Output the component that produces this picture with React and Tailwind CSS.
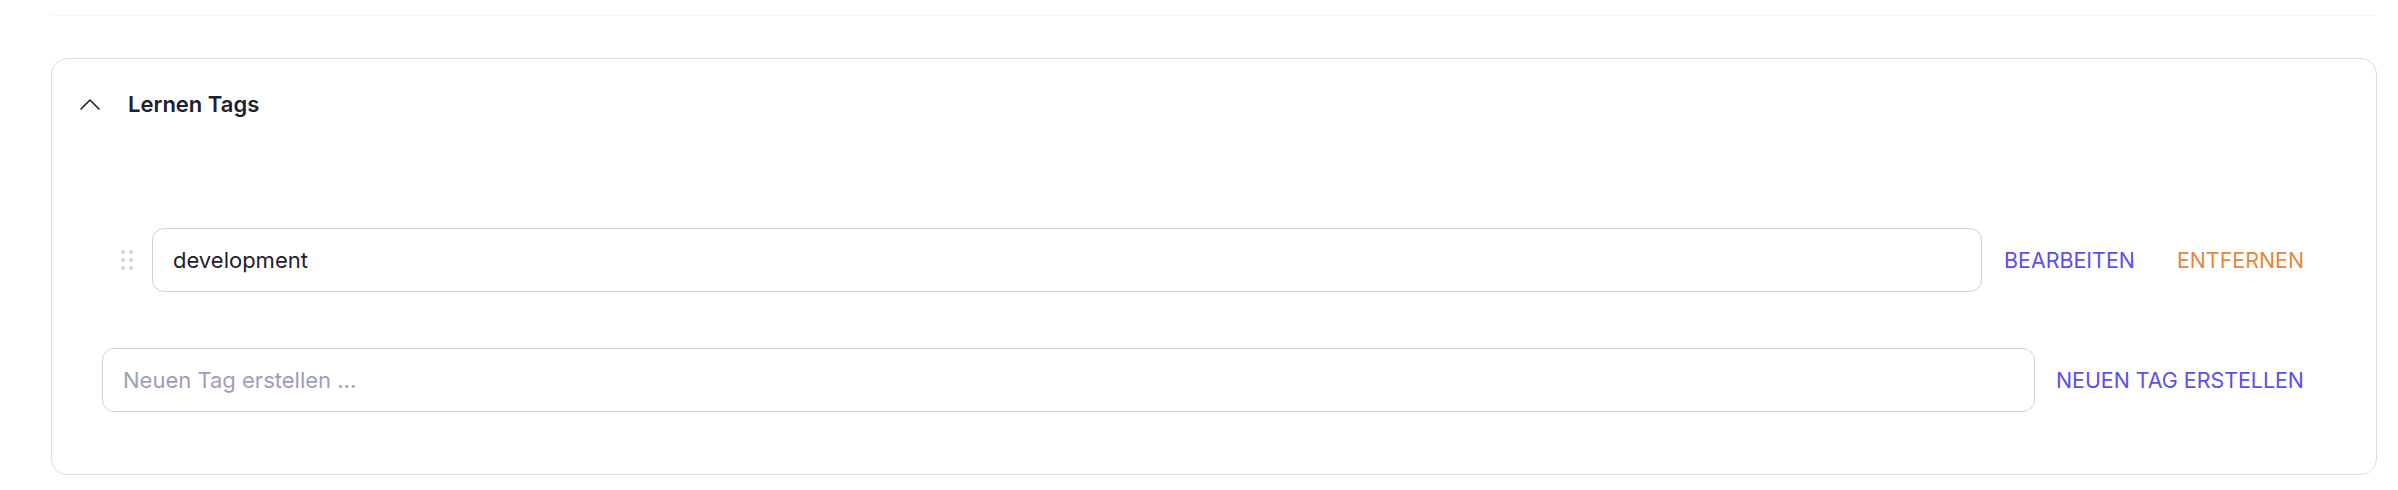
import React from "react";

function ChevronUp() {
  return (
    <svg width="20" height="12" viewBox="0 0 20 12" fill="none" className="text-[#1e2030]">
      <polyline points="1,11 10,2 19,11" stroke="currentColor" strokeWidth="1.6" strokeLinecap="round" strokeLinejoin="round" />
    </svg>
  );
}

function DragHandle() {
  return (
    <div className="grid grid-cols-2 gap-x-[4px] gap-y-[4px]">
      {[0, 1, 2, 3, 4, 5].map((i) => (
        <span key={i} className="block h-[4px] w-[4px] rounded-full bg-[#d5d7e2]"></span>
      ))}
    </div>
  );
}

function TagRow({ tag }) {
  return (
    <div className="flex items-center">
      <div className="flex w-[50px] justify-center">
        <DragHandle />
      </div>
      <input
        defaultValue={tag}
        readOnly
        className="h-16 flex-1 rounded-xl border border-[#cfd0dc] px-5 text-[22px] text-[#1e2030] outline-none"
      />
      <button className="ml-[22px] text-[21.4px] uppercase text-[#5a4ff3]">Bearbeiten</button>
      <button className="ml-[42px] text-[21.4px] uppercase text-[#e5883c]">Entfernen</button>
    </div>
  );
}

export default function App() {
  const tags = ["development"];

  return (
    <div className="min-h-screen bg-white font-['Inter','Liberation_Sans',sans-serif]">
      <div className="ml-[51px] mr-[21px] h-4 border-b border-[#f5f5f7]"></div>
      <div className="ml-[51px] mr-[21px] mt-[42px] rounded-2xl border border-[#dcdce5]">
        <div className="flex h-[90px] items-center">
          <div className="ml-[28px] flex w-5 justify-center">
            <ChevronUp />
          </div>
          <h2 className="ml-[28px] text-[22px] font-semibold text-[#1e2030]">Lernen Tags</h2>
        </div>
        <div className="pb-[62px] pl-[50px] pr-[72px] pt-[79px]">
          <div className="flex flex-col gap-14">
            {tags.map((tag) => (
              <TagRow key={tag} tag={tag} />
            ))}
            <div className="flex items-center">
              <input
                placeholder="Neuen Tag erstellen ..."
                className="h-16 flex-1 rounded-xl border border-[#cfd0dc] px-5 text-[22px] text-[#1e2030] outline-none placeholder:text-[#9c9fb7]"
              />
              <button className="ml-[21px] text-[21.4px] uppercase text-[#5a4ff3]">Neuen Tag erstellen</button>
            </div>
          </div>
        </div>
      </div>
    </div>
  );
}
